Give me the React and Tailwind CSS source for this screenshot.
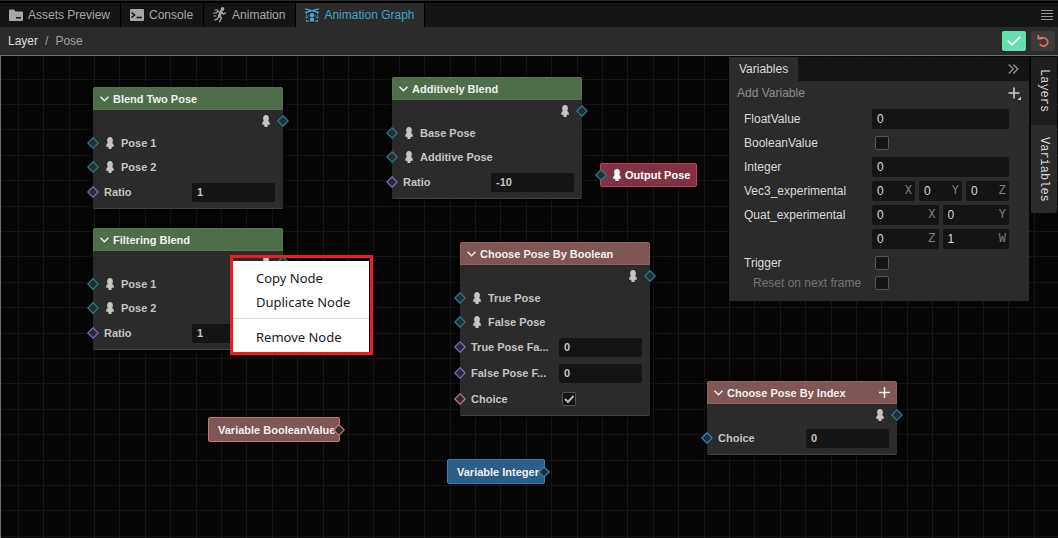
import React, { useState } from "react";

const PORT_COLORS = {
  pose: "#267a94",
  float: "#7f67c4",
  bool: "#c47474",
  int: "#2b84cf",
};

const HEADER_COLORS = {
  green: "bg-[#4f6d4b] border-[#58754f]",
  red: "bg-[#805555] border-[#8f6161]",
};

const NODES = [
  {
    id: "blend-two",
    title: "Blend Two Pose",
    x: 92,
    y: 31,
    color: "green",
    rows: [
      { type: "pose", label: "Pose 1" },
      { type: "pose", label: "Pose 2" },
      { type: "float", label: "Ratio", value: "1" },
    ],
  },
  {
    id: "additive",
    title: "Additively Blend",
    x: 391,
    y: 21,
    color: "green",
    rows: [
      { type: "pose", label: "Base Pose" },
      { type: "pose", label: "Additive Pose" },
      { type: "float", label: "Ratio", value: "-10" },
    ],
  },
  {
    id: "filtering",
    title: "Filtering Blend",
    x: 92,
    y: 172,
    color: "green",
    rows: [
      { type: "pose", label: "Pose 1" },
      { type: "pose", label: "Pose 2" },
      { type: "float", label: "Ratio", value: "1" },
    ],
  },
  {
    id: "choose-bool",
    title: "Choose Pose By Boolean",
    x: 459,
    y: 186,
    color: "red",
    rows: [
      { type: "pose", label: "True Pose" },
      { type: "pose", label: "False Pose" },
      { type: "float", label: "True Pose Fa...", value: "0" },
      { type: "float", label: "False Pose F...", value: "0" },
      { type: "bool", label: "Choice", value: true },
    ],
  },
  {
    id: "choose-index",
    title: "Choose Pose By Index",
    x: 706,
    y: 325,
    color: "red",
    canAdd: true,
    rows: [{ type: "int", label: "Choice", value: "0" }],
  },
];

function FolderIcon() {
  return (
    <svg width="14" height="12" viewBox="0 0 14 12">
      <path d="M0 1.5Q0 .5 1 .5H5L6.500 2.500H13Q14 2.500 14 3.500V11Q14 12 13 12H1Q0 12 0 11Z" fill="currentColor" />
      <rect x="7" y="8" width="5" height="1.500" fill="#141414" />
    </svg>
  );
}

function ConsoleIcon() {
  return (
    <svg width="14" height="12" viewBox="0 0 14 12">
      <rect width="14" height="12" rx="1" fill="currentColor" />
      <path d="M1.500 3.500L4.500 6L1.500 8.500M6.500 8.500H12" fill="none" stroke="#141414" strokeWidth="1.600" />
    </svg>
  );
}

function RunIcon() {
  return (
    <svg width="14" height="16" viewBox="0 0 14 16" fill="none" stroke="currentColor">
      <circle cx="9.500" cy="2" r="1.900" fill="currentColor" stroke="none" />
      <path d="M8 4.500L6.300 9" strokeWidth="2.800" strokeLinecap="round" />
      <path d="M8.500 5L10.500 7L13 5.500M6 4.500L3.500 5M6.500 9L8.500 11L6.500 15M6 9.500L4.500 12L1.500 13" strokeWidth="1.400" />
      <path d="M1.500 3H5.500M0 6H4M.5 9H3.500" strokeWidth="1" />
    </svg>
  );
}

function GraphIcon() {
  return (
    <svg width="14" height="14" viewBox="0 0 14 14" fill="none" stroke="currentColor">
      <path d="M0 .8L14 4.500M14 .8L0 4.500" strokeWidth="1.300" />
      <path d="M1.500 4.500V8M12.500 4.500V8M2.500 8.500L4.500 7M11.500 8.500L9.500 7" strokeWidth="1" strokeDasharray="1.500 1" />
      <circle cx="7" cy="7.200" r="2.200" fill="currentColor" stroke="none" />
      <path d="M5 10H9V13.500H5Z" fill="currentColor" stroke="none" />
      <path d="M.5 9.500H2.500M11.500 9.500H13.500M1 13H3.500M10.500 13H13" strokeWidth="1.400" />
    </svg>
  );
}

function PoseIcon() {
  return (
    <svg width="8" height="12" viewBox="0 0 8 12" className="shrink-0">
      <path
        d="M4 0C5.900 0 6.900 1.500 6.900 3.300C6.900 4.500 6.600 5.300 6.200 5.900C7.100 6.400 7.600 7.300 7.700 8.200L8 9.800H6.700L6.200 9.200V10.300H5.500V12H2.500V10.300H1.800V9.200L1.300 9.800H0L.3 8.200C.4 7.300 .9 6.400 1.800 5.900C1.400 5.300 1.100 4.500 1.100 3.300C1.100 1.500 2.100 0 4 0Z"
        fill="currentColor"
      />
    </svg>
  );
}

function PlusIcon() {
  return (
    <svg width="11" height="11" viewBox="0 0 11 11" stroke="currentColor" strokeWidth="1.500">
      <path d="M5.500 0V11M0 5.500H11" />
    </svg>
  );
}

function Port({ type, side = "left" }) {
  return (
    <svg
      width="12"
      height="12"
      viewBox="0 0 12 12"
      className={`absolute top-1/2 -translate-y-1/2 ${side === "left" ? "-left-1.5" : "-right-1.5"}`}
    >
      <path d="M6 .8L11.200 6L6 11.200L.8 6Z" fill="#2b2b2b" stroke={PORT_COLORS[type]} strokeWidth="1.300" />
    </svg>
  );
}

function CheckBox({ id, label, defaultChecked = false }) {
  const [checked, setChecked] = useState(defaultChecked);
  return (
    <span className="relative ml-[3px] block size-3.5 shrink-0">
      <input
        id={id}
        type="checkbox"
        aria-label={label}
        checked={checked}
        onChange={(e) => setChecked(e.target.checked)}
        className="block size-3.5 appearance-none rounded-xs border border-[#555] bg-[#141414]"
      />
      {checked && (
        <svg width="14" height="14" viewBox="0 0 14 14" className="pointer-events-none absolute inset-0">
          <path d="M3 7L6 10L11.500 4" fill="none" stroke="#b8b8b8" strokeWidth="2" />
        </svg>
      )}
    </span>
  );
}

function NodeRow({ nodeId, index, row }) {
  const id = `${nodeId}-${index}`;
  if (row.type === "pose") {
    return (
      <div className="relative flex h-6 items-center gap-[7px] pl-[13px]">
        <Port type="pose" />
        <PoseIcon />
        <span>{row.label}</span>
      </div>
    );
  }
  return (
    <div className="relative flex h-[26px] items-center pr-2 pl-[11px]">
      <Port type={row.type} />
      <label htmlFor={id} className="flex-1 whitespace-nowrap">
        {row.label}
      </label>
      <div className="w-[83px]">
        {row.type === "bool" ? (
          <CheckBox id={id} defaultChecked={row.value} />
        ) : (
          <input
            id={id}
            defaultValue={row.value}
            className="block h-[19px] w-full rounded-xs bg-[#141414] px-[5px] outline-none"
          />
        )}
      </div>
    </div>
  );
}

function GraphNode({ node }) {
  return (
    <section
      className="absolute w-[190px] rounded-xs bg-[#2b2b2b] text-[11px] font-bold text-[#c4c4c4] shadow-[0_0_8px_#000]"
      style={{ left: node.x, top: node.y }}
    >
      <header
        className={`flex h-[23px] items-center gap-1 rounded-t-xs border px-[6px] text-[#f0f0f0] ${HEADER_COLORS[node.color]}`}
      >
        <svg width="9" height="6" viewBox="0 0 9 6" fill="none" stroke="currentColor" strokeWidth="1.400">
          <path d="M.5 .7L4.500 4.800L8.500 .7" />
        </svg>
        <h2 className="flex-1 truncate">{node.title}</h2>
        {node.canAdd && (
          <button aria-label="Add pose">
            <PlusIcon />
          </button>
        )}
      </header>
      <div className="rounded-b-xs border-b border-[#424242] pb-[3px]">
        <div className="relative flex h-[21px] items-center justify-end pr-[13px]">
          <PoseIcon />
          <Port type="pose" side="right" />
        </div>
        {node.rows.map((row, i) => (
          <NodeRow key={i} nodeId={node.id} index={i} row={row} />
        ))}
      </div>
    </section>
  );
}

function Grid() {
  return (
    <svg className="absolute inset-0 size-full" shapeRendering="crispEdges">
      <defs>
        <pattern id="grid" width="127" height="127" patternUnits="userSpaceOnUse">
          <path
            d="M17.500 0V127M42.500 0V127M68.500 0V127M93.500 0V127M118.500 0V127M0 23.500H127M0 48.500H127M0 73.500H127M0 99.500H127M0 124.500H127"
            stroke="#161616"
          />
        </pattern>
      </defs>
      <rect width="100%" height="100%" fill="url(#grid)" />
    </svg>
  );
}

function ContextMenu() {
  return (
    <div className="absolute top-[199px] left-[229px] w-[143px] border-3 border-[#ee1c24] pt-[3px] pr-px">
      <div className="bg-white pt-[5px] pb-[3px] font-['Noto_Sans',sans-serif] text-[13px] text-[#1a1a1a]">
        <button className="block h-6 w-full pl-[23px] text-left">Copy Node</button>
        <button className="block h-6 w-full pl-[23px] text-left">Duplicate Node</button>
        <hr className="mt-1 mb-1.5 border-[#d5d5d5]" />
        <button className="block h-6 w-full pl-[23px] text-left">Remove Node</button>
      </div>
    </div>
  );
}

function AxisInput({ name, axis, value }) {
  return (
    <label className="flex h-5 min-w-0 flex-1 items-center rounded-xs bg-[#141414] pr-[3px] pl-[5px]">
      <input
        aria-label={`${name} ${axis}`}
        defaultValue={value}
        className="w-full min-w-0 flex-1 outline-none"
      />
      <span className="font-['Liberation_Mono',monospace] text-[#808080]">{axis}</span>
    </label>
  );
}

function VariableRow({ label, htmlFor, children }) {
  return (
    <div className="flex h-6 items-center pr-5 pl-[15px]">
      <label htmlFor={htmlFor} className="w-32 shrink-0">
        {label}
      </label>
      <div className="flex flex-1 gap-1">{children}</div>
    </div>
  );
}

function NumberInput({ id }) {
  return (
    <input
      id={id}
      defaultValue="0"
      className="h-5 w-full min-w-0 rounded-xs bg-[#141414] px-[5px] outline-none"
    />
  );
}

function VariablesPanel() {
  return (
    <aside className="relative w-[300px] bg-[#2b2b2b] pb-2.5 text-[#dadada]">
      <header className="flex h-6 items-stretch justify-between bg-[#141414] pr-2.5">
        <h2 className="flex items-center bg-[#2b2b2b] px-2.5">Variables</h2>
        <button aria-label="Collapse" className="text-[#999]">
          <svg width="11" height="10" viewBox="0 0 11 10" fill="none" stroke="currentColor" strokeWidth="1.200">
            <path d="M.8 .5L5.300 5L.8 9.500M5.300 .5L9.800 5L5.300 9.500" />
          </svg>
        </button>
      </header>
      <div className="mb-0.5 flex h-6 items-center justify-between pr-2 pl-2 text-[#8e8e8e]">
        <span>Add Variable</span>
        <button aria-label="Add variable" className="text-[#cccccc]">
          <svg width="13" height="13" viewBox="0 0 13 13">
            <path d="M6 .5V11.500M.5 6H11.500" stroke="currentColor" strokeWidth="1.600" />
            <path d="M13 9.500V13H9.500Z" fill="currentColor" />
          </svg>
        </button>
      </div>
      <VariableRow label="FloatValue" htmlFor="var-float">
        <NumberInput id="var-float" />
      </VariableRow>
      <VariableRow label="BooleanValue" htmlFor="var-bool">
        <CheckBox id="var-bool" />
      </VariableRow>
      <VariableRow label="Integer" htmlFor="var-int">
        <NumberInput id="var-int" />
      </VariableRow>
      <VariableRow label="Vec3_experimental">
        <AxisInput name="Vec3" axis="X" value="0" />
        <AxisInput name="Vec3" axis="Y" value="0" />
        <AxisInput name="Vec3" axis="Z" value="0" />
      </VariableRow>
      <VariableRow label="Quat_experimental">
        <AxisInput name="Quat" axis="X" value="0" />
        <AxisInput name="Quat" axis="Y" value="0" />
      </VariableRow>
      <VariableRow>
        <AxisInput name="Quat" axis="Z" value="0" />
        <AxisInput name="Quat" axis="W" value="1" />
      </VariableRow>
      <VariableRow label="Trigger" htmlFor="var-trigger">
        <CheckBox id="var-trigger" />
      </VariableRow>
      <div className="flex h-4 items-center pl-6 text-[#737373]">
        <label htmlFor="var-reset" className="w-[119px]">
          Reset on next frame
        </label>
        <CheckBox id="var-reset" />
      </div>
    </aside>
  );
}

function Tab({ icon, children, active }) {
  return (
    <button
      className={`flex items-center gap-[5px] border-r border-black pr-2.5 pl-[9px] ${
        active ? "bg-[#2b2b2b] text-[#3ea6c6]" : "text-[#a6a6a6]"
      }`}
    >
      {icon}
      {children}
    </button>
  );
}

export default function App() {
  return (
    <div className="flex min-h-screen flex-col bg-black font-['Liberation_Sans',Arial,sans-serif] text-[12px] leading-4">
      <nav className="flex h-[27px] items-stretch border-t border-[#2b2b2b] bg-black pt-0.5">
        <div className="flex flex-1 items-stretch bg-[#141414]">
          <Tab icon={<FolderIcon />}>Assets Preview</Tab>
          <Tab icon={<ConsoleIcon />}>Console</Tab>
          <Tab icon={<RunIcon />}>Animation</Tab>
          <Tab icon={<GraphIcon />} active>
            Animation Graph
          </Tab>
          <button aria-label="Menu" className="mr-[5px] ml-auto text-[#999]">
            <svg width="12" height="11" viewBox="0 0 12 11" stroke="currentColor">
              <path d="M0 .5H12M0 3.500H12M0 6.500H12M0 9.500H12" />
            </svg>
          </button>
        </div>
      </nav>

      <div className="flex h-[29px] items-center gap-[5px] border-b border-[#707070] bg-[#2b2b2b] pr-[3px] pl-2">
        <a href="#layer" className="text-[#dedede]">
          Layer
        </a>
        <span className="px-0.5 text-[#a0a0a0]">/</span>
        <a href="#pose" className="text-[#a0a0a0]">
          Pose
        </a>
        <button
          aria-label="Apply"
          className="ml-auto flex h-5 w-6 items-center justify-center rounded-xs bg-[#66dfb0] text-white"
        >
          <svg width="14" height="10" viewBox="0 0 14 10" fill="none" stroke="currentColor" strokeWidth="1.700">
            <path d="M.8 4.500L5 8.800L13.200 .8" />
          </svg>
        </button>
        <button
          aria-label="Revert"
          className="flex h-5 w-6 items-center justify-center rounded-xs bg-[#3c3c3c] text-[#ee6a5f]"
        >
          <svg width="13" height="12" viewBox="0 0 13 12" fill="none" stroke="currentColor" strokeWidth="1.700">
            <path d="M2.200 2.800H7A4.200 4.200 0 1 1 2.800 9" />
            <path d="M1.300 0V3.800H5" strokeWidth="1.500" />
          </svg>
        </button>
      </div>

      <main className="relative flex flex-1 items-start justify-end overflow-hidden border-l border-[#707070] bg-[#050505] pt-px">
        <Grid />
        {NODES.map((node) => (
          <GraphNode key={node.id} node={node} />
        ))}
        <div className="absolute top-[107px] left-[599px] flex h-6 w-[97px] items-center gap-1 rounded-xs border border-[#c73d58] bg-[#7f3243] pl-3 text-[11px] font-bold whitespace-nowrap text-white">
          <Port type="pose" />
          <PoseIcon />
          Output Pose
        </div>
        <div className="absolute top-[361px] left-[207px] flex h-[25px] w-[132px] items-center rounded-xs border border-[#c47474] bg-[#805555] pl-[9px] text-[11px] font-bold whitespace-nowrap text-[#f0f0f0]">
          Variable BooleanValue
          <Port type="bool" side="right" />
        </div>
        <div className="absolute top-[403px] left-[446px] flex h-[25px] w-[98px] items-center rounded-xs border border-[#2b84cf] bg-[#2b5f87] pl-[9px] text-[11px] font-bold whitespace-nowrap text-[#f0f0f0]">
          Variable Integer
          <Port type="int" side="right" />
        </div>
        <ContextMenu />

        <VariablesPanel />
        <div className="relative mr-px ml-0.5 flex w-[26px] flex-col font-['Liberation_Mono',monospace] text-[12px] text-[#dadada]">
          <button className="flex h-[68px] items-center justify-center bg-[#1e1e1e]">
            <span className="[writing-mode:vertical-rl]">Layers</span>
          </button>
          <button className="flex h-[88px] items-center justify-center rounded-b-xs bg-[#2b2b2b]">
            <span className="[writing-mode:vertical-rl]">Variables</span>
          </button>
        </div>
      </main>
    </div>
  );
}
